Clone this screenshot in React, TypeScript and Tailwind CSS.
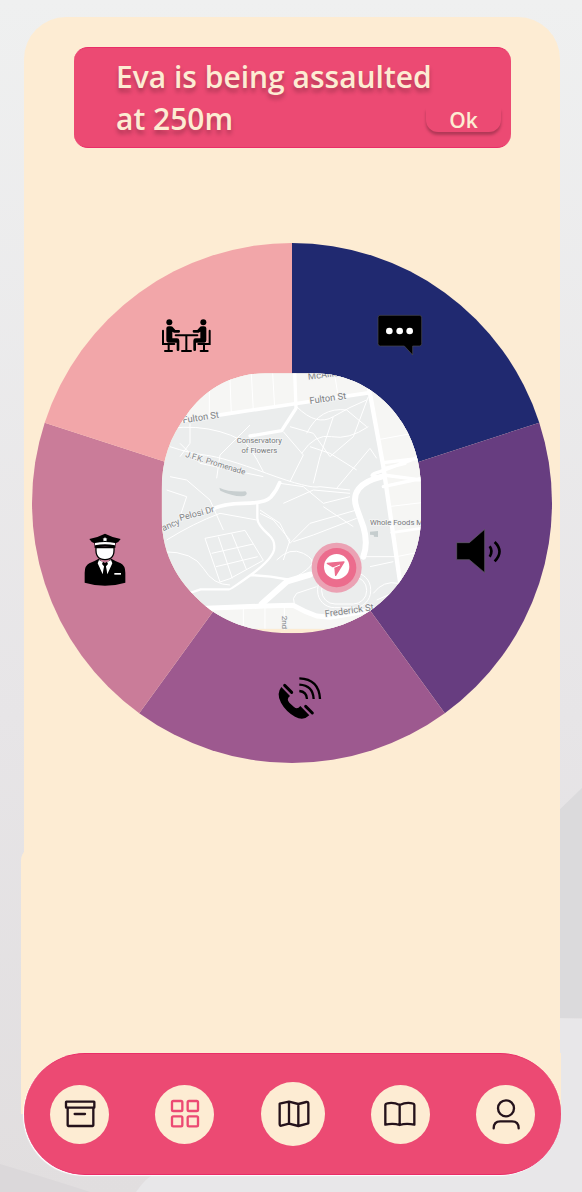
import type { ReactNode } from "react";

type WheelAction = { label: string; place: string; viewBox: string; art: ReactNode };

const slices = [
  { color: "#202970", d: "M260 260V0A260 260 0 0 1 507.3 179.7Z" },
  { color: "#673d80", d: "M260 260L507.3 179.7A260 260 0 0 1 412.8 470.3Z" },
  { color: "#9d598f", d: "M260 260L412.8 470.3A260 260 0 0 1 107.2 470.3Z" },
  { color: "#ca7c99", d: "M260 260L107.2 470.3A260 260 0 0 1 12.7 179.7Z" },
  { color: "#f2a6a9", d: "M260 260L12.7 179.7A260 260 0 0 1 260 0Z" },
];

const actions: WheelAction[] = [
  {
    label: "Meet up",
    place: "left-[30%] top-[18%]",
    viewBox: "33 36 162 162",
    art: (
      <>
        <circle cx="58" cy="73" r="9" />
        <circle cx="160" cy="73" r="9" />
        <path d="M49 91q0-6 7-6h6q5 0 8 4l6 7h11q3 0 3 4t-3 4H72l-5-3v20h14q7 0 7 7v27q0 4-4 4t-4-4v-21H55q-6 0-6-7Z" />
        <path d="M169 91q0-6-7-6h-6q-5 0-8 4l-6 7h-11q-3 0-3 4t3 4h15l5-3v20h-14q-7 0-7 7v27q0 4 4 4t4-4v-21h25q6 0 6-7Z" />
        <g fill="none" stroke="#000" strokeWidth="6" strokeLinecap="round">
          <path d="M39 98v40h34M56 138v20M45 159h21" />
          <path d="M179 98v40h-34M162 138v20M152 159h21" />
          <path d="M77 112h65M109 112v45M96 159h27" />
        </g>
      </>
    ),
  },
  {
    label: "Send message",
    place: "left-[71%] top-[18%]",
    viewBox: "27 29 162 162",
    art: (
      <>
        <path
          d="M45 45h118q7 0 7 7v78q0 7-7 7h-20v27l-25-27H46q-7 0-7-7V52q0-7 6-7Z"
          stroke="#4b4b50"
          strokeWidth="2"
        />
        <g fill="#fff">
          <circle cx="73" cy="92" r="10" />
          <circle cx="104" cy="92" r="10" />
          <circle cx="134" cy="92" r="10" />
        </g>
      </>
    ),
  },
  {
    label: "Call the police",
    place: "left-[14%] top-[61%]",
    viewBox: "24 38 162 162",
    art: (
      <>
        <path d="M78 82q-3 36 27 36t27-36Z" fill="#fff" stroke="#000" strokeWidth="4" />
        <path d="M58 56q26-5 47-16 21 11 47 16-5 9-15 13l-1 14q-31-8-62 0l-1-14q-10-4-15-13Z" />
        <path d="M75 68q30-6 60 0v7q-30-6-60 0Z" fill="#fff" />
        <path d="m105 50 2 4 5 1-3 3 1 5-5-2-5 2 1-5-3-3 5-1Z" fill="#fff" />
        <path d="M86 115q-15 9-28 14-14 7-14 28v30q29 9 61 9t61-9v-30q0-21-14-28-13-5-28-14l-19 18Z" />
        <path d="m87 119 18 10 18-10 4 10-15 33-4-21h-6l-4 21-15-33Z" fill="#fff" />
        <path d="m99 124 6 4 6-4 3 7-6 7 3 36-6 10-6-10 3-36-6-7Z" />
        <path d="M133 158h20v5h-20z" fill="#fff" />
      </>
    ),
  },
  {
    label: "Sound alarm",
    place: "left-[86%] top-[59%]",
    viewBox: "21 27 162 162",
    art: (
      <>
        <path d="M35 86h38l46-40v130l-46-39H35Z" stroke="#65606a" strokeWidth="2" />
        <g fill="none" stroke="#000" strokeWidth="8">
          <path d="M134 97q11 15 0 31" />
          <path d="M149 84q29 28 0 58" />
        </g>
      </>
    ),
  },
  {
    label: "Phone call",
    place: "left-[52%] top-[88%]",
    viewBox: "30 26 162 162",
    art: (
      <>
        <path d="m49 65 26 27q-12 9-2 20l14 13q10 9 19-3l27 28q-18 18-43 4-28-16-42-42-15-27 1-47Z" />
        <g fill="none" stroke="#000" strokeLinecap="round">
          <path d="m59 60 21 21M122 123l20 20" strokeWidth="9" />
          <path d="M103 39q59 2 62 62M103 58q41 2 43 43M103 77q22 2 23 24" strokeWidth="7" strokeLinecap="butt" />
        </g>
      </>
    ),
  },
];

const tabs = [
  {
    label: "Archive",
    size: "size-[59px]",
    color: "text-[#24121b]",
    viewBox: "186 172 108 108",
    art: (
      <>
        <rect x="198" y="189" width="85" height="18" rx="1" />
        <path d="M203 208v52q0 2 2 2h73q2 0 2-2v-52M224 226h31" />
      </>
    ),
  },
  {
    label: "Dashboard",
    size: "size-[59px]",
    color: "text-[#ec4a73]",
    viewBox: "504 169 108 108",
    art: (
      <>
        <rect x="519" y="184" width="31" height="30" rx="4" />
        <rect x="566" y="184" width="31" height="30" rx="4" />
        <rect x="519" y="230" width="31" height="30" rx="4" />
        <rect x="566" y="230" width="31" height="30" rx="4" />
      </>
    ),
  },
  {
    label: "Map",
    size: "size-16",
    color: "text-[#24121b]",
    viewBox: "-35 167 108 108",
    art: <path d="M-21 190 7 184 35 191 59 185Q65 184 65 190V249L35 257 7 250-16 256Q-21 257-21 251ZM7 184V250M35 191V257" />,
  },
  {
    label: "Guides",
    size: "size-[59px]",
    color: "text-[#24121b]",
    viewBox: "277 168 108 108",
    art: <path d="M330 195Q312 186 293 190 287 191 287 196V254Q311 249 330 255 349 249 374 254V196Q374 191 368 190 349 186 330 195ZM330 195V255" />,
  },
  {
    label: "Profile",
    size: "size-[59px]",
    color: "text-[#24121b]",
    viewBox: "596 167 108 108",
    art: (
      <>
        <circle cx="650" cy="204" r="24" />
        <path d="M613 264q0-21 20-21h35q20 0 20 21" />
      </>
    ),
  },
];

function Backdrop() {
  return (
    <svg className="absolute inset-0 -z-10 size-full" viewBox="0 0 582 1192" preserveAspectRatio="none" aria-hidden="true">
      <defs>
        <linearGradient id="wall" x1="0" y1="0" x2="0" y2="1">
          <stop offset="0" stopColor="#eff0f0" />
          <stop offset="0.6" stopColor="#e7e5e7" />
          <stop offset="1" stopColor="#e1dedf" />
        </linearGradient>
      </defs>
      <path d="M0 0h582v1192H0z" fill="url(#wall)" />
      <path d="M582 788 520 848V1018H582Z" fill="#dbdadc" />
      <path d="M520 1017 582 1019V1192H136Q145 1178 160 1170Z" fill="#e8e7e9" />
      <path d="M0 1164Q60 1182 90 1192H0Z" fill="#dbd8da" />
    </svg>
  );
}

function StreetMap() {
  return (
    <g transform="translate(118 117) scale(0.33333)">
      <clipPath id="lens">
        <path d="M345 40H490C590 40 680 85 740 165 790 230 813 310 813 390V470C813 590 750 690 660 752 590 798 510 820 424 820 335 820 255 798 185 752 90 680 35 590 35 470V390C35 300 60 230 110 165 165 85 250 40 345 40Z" />
      </clipPath>
      <g clipPath="url(#lens)">
        <path d="M0 0h870v840H0z" fill="#fdecd3" />
        <path d="M0 0h870v806H0z" fill="#ebeded" />
        <g fill="#f6f6f4">
          <path d="M0 180 220 164 660 100 650 0H0Z" />
          <path d="M660 100 700 310 750 660 760 806H870V0H650Z" />
          <path d="M180 742 430 735 500 770 680 750 720 806H150Z" />
        </g>
        <g fill="none" stroke="#fff" strokeWidth="3">
          <path d="M178 90v78M240 60l4 100M304 40l6 112M368 40l6 104M555 50l10 62M680 240l130-24M715 440l100-12M740 590l70-14M280 745v60M345 740v66M403 740v70" />
          <path d="M60 260q60 20 110 26t180 54 160 40l90 10M60 205q80-10 150 10t90 50 40 70M120 190v60l-30 40M90 250l60 60 190 40M200 355l10-70 90-90M440 140q60 60 110 30t100-50M470 220q40-80 120-70l60 50M455 280q40-60 90-50t110-30M490 370l20-80 40-120M420 200l70 20 50 70 70-60 45-120M560 385l100-120 20 30M480 260l60 20 80 50M400 215l60 70-40 80" />
          <path d="M60 350l50 10 70 60 40 90M50 390l60 20-20 60 90-20M50 540q80-50 160-80l110 20M40 575q90 0 120 50t80 50M390 370l70 10 60 50 80-20M400 430l90-40 110 10M420 550l-30-60-60-40M420 550l60-60 140-40M430 545l60-20 130-50M380 600q40-40 80-20t20 40-60 40M470 760q-60-30-30-60l60-20M330 460l40 20 50 60-20 60M520 440l90 60M640 590h100M660 620l70-15M670 700q30-40 75-30M680 720l70-30" />
          <path d="M165 535l120-24 55 90-100 55-30 10ZM185 580l125-28M198 620l125-30M205 530l42 125M245 520l45 110" />
          <rect x="515" y="650" width="135" height="82" rx="40" />
          <rect x="503" y="638" width="159" height="105" rx="50" />
        </g>
        <g fill="none" stroke="#fff" strokeLinejoin="round" strokeLinecap="round">
          <path d="M100 182 240 160 430 132 660 98" strokeWidth="11" />
          <path d="M434 35 438 145 395 212 300 228" strokeWidth="10" />
          <path d="M658 90 700 320 750 665" strokeWidth="13" />
          <path d="M180 450Q220 430 280 430 345 430 362 412 380 392 389 368" strokeWidth="11" />
          <path d="M322 430v45q0 20 35 50 20 18 15 45-8 30-70 75t-65 43l-85 0-60 20M302 645l60 5 60 10" strokeWidth="7" />
          <path d="M695 350Q640 350 690 335L815 288M700 308l100-12M700 345l115 15M700 380l115-25M705 325l60-15" strokeWidth="10" />
          <path d="M335 732 412 664 480 644M640 590Q655 550 640 500L620 445Q595 375 695 350" strokeWidth="18" />
          <path d="M170 745 340 738 430 736Q465 756 500 768L540 772 680 748" strokeWidth="15" />
          <path d="M725 518 815 505" strokeWidth="8" />
        </g>
        <path d="M208 383q30 14 78 11 10 8-3 14-32 3-72-16Z" fill="#c8cfd0" />
        <path d="m660 515 24-2v18l-12-1-1-5-11-1Z" fill="#c5cdce" />
        <g className="font-[Roboto,sans-serif]" fill="#818385" fontSize="28" stroke="#f4f5f5" strokeWidth="5" paintOrder="stroke">
          <text x="99" y="190" transform="rotate(-9 99 190)">Fulton St</text>
          <text x="480" y="132" transform="rotate(-8 480 132)">Fulton St</text>
          <text x="475" y="59" transform="rotate(-7 475 59)">McAllister St</text>
          <text x="105" y="290" fontSize="24" transform="rotate(17 105 290)">J.F.K. Promenade</text>
          <text x="40" y="514" fontSize="27" transform="rotate(-24 40 514)">ancy</text>
          <text x="91" y="483" fontSize="27" transform="rotate(-15 91 483)">Pelosi Dr</text>
          <text x="526" y="771" transform="rotate(-8 526 771)">Frederick St</text>
          <text x="397" y="767" fontSize="24" transform="rotate(90 397 767)">2nd</text>
          <g fontSize="23" fill="#77797b">
            <text x="328" y="250" textAnchor="middle">Conservatory</text>
            <text x="328" y="279" textAnchor="middle">of Flowers</text>
            <text x="660" y="496">Whole Foods Market</text>
          </g>
        </g>
        <circle cx="560" cy="623" r="75" fill="#eba2b4" />
        <circle cx="560" cy="623" r="59" fill="#ec6c8d" />
        <circle cx="560" cy="620" r="38" fill="#fff" />
        <path d="M532 610 582 606 557 646 555 624Z" fill="#ec6c8d" stroke="#ec6c8d" strokeWidth="4" strokeLinejoin="round" />
        <path d="m548 624 22-9" stroke="#fff" strokeWidth="3" />
      </g>
    </g>
  );
}

export default function App() {
  return (
    <div className="relative isolate flex min-h-screen flex-col pt-[17px] pr-[22px] pb-[17px] pl-6 font-['Open_Sans',sans-serif]">
      <Backdrop />
      <main className="flex grow flex-col rounded-t-[42px] bg-[#fdecd3] px-2 pt-[30px]">
        <section
          role="alert"
          className="mr-[41px] ml-[42px] flex items-end justify-between rounded-[14px] border-y border-[#e92e68] bg-[#ec4a73] pt-2 pr-[10px] pb-[7px] pl-[42px] text-[#fdecd3]"
        >
          <p className="text-[30px] leading-[42px] font-semibold whitespace-nowrap [text-shadow:0_4px_4px_rgb(0_0_0/0.25)]">
            Eva is being assaulted
            <br />
            at 250m
          </p>
          <button
            type="button"
            className="-ml-6 mb-2 h-6 w-[75px] rounded-b-[12px] bg-[#ec4a73] text-[21px] leading-6 font-semibold shadow-[0_3px_3px_rgb(0_0_0/0.25)]"
          >
            Ok
          </button>
        </section>
        <section aria-label="Emergency actions" className="relative mt-[95px] aspect-square w-full">
          <svg viewBox="0 0 520 520" className="size-full" role="img" aria-label="Map of your area">
            {slices.map((slice) => (
              <path key={slice.color} d={slice.d} fill={slice.color} />
            ))}
            <StreetMap />
          </svg>
          {actions.map((action) => (
            <button
              key={action.label}
              type="button"
              aria-label={action.label}
              className={`absolute size-[54px] -translate-x-1/2 -translate-y-1/2 ${action.place}`}
            >
              <svg viewBox={action.viewBox} className="size-full" aria-hidden="true">
                {action.art}
              </svg>
            </button>
          ))}
        </section>
        <div className="mt-[82px] -ml-[11px] min-h-12 w-8 grow rounded-tl-[16px] bg-[#fdecd3]" />
      </main>
      <div className="-mr-px -ml-[3px] bg-linear-to-b from-[#fdecd3] from-50% to-transparent to-50% pl-[3px]">
        <nav
          aria-label="Main"
          className="flex h-[122px] items-center justify-between rounded-full border-y border-[#e92e68] bg-[#ec4a73] px-[26px] shadow-[-1px_1px_1px_#fff]"
        >
          {tabs.map((tab) => (
            <button
              key={tab.label}
              type="button"
              aria-label={tab.label}
              className={`flex items-center justify-center rounded-full bg-[#fdecd3] ${tab.size} ${tab.color}`}
            >
              <svg
                viewBox={tab.viewBox}
                className="size-9"
                fill="none"
                stroke="currentColor"
                strokeWidth="7"
                strokeLinecap="round"
                strokeLinejoin="round"
                aria-hidden="true"
              >
                {tab.art}
              </svg>
            </button>
          ))}
        </nav>
      </div>
    </div>
  );
}
